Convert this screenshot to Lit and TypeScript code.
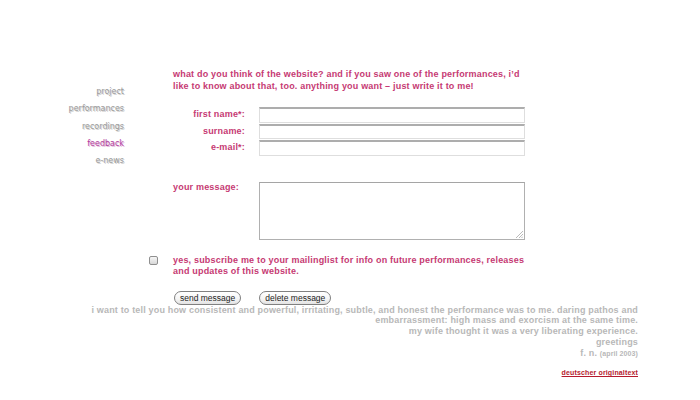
import { LitElement, html, css } from "lit";
import { customElement } from "lit/decorators.js";

@customElement("app-root")
export class AppRoot extends LitElement {
  static styles = css`
    :host { display: block; width: 700px; height: 400px; background: #fff; overflow: hidden;
      font-family: "Liberation Sans", Arial, sans-serif; font-size: 9px; font-weight: bold; letter-spacing: 0.19px; }
    .top { display: grid; grid-template-columns: 124px 1fr; column-gap: 49px; padding-top: 69px; }
    nav { display: flex; flex-direction: column; align-items: flex-end; gap: 5.3px; padding-top: 17px; }
    nav a { font-family: "DejaVu Sans", sans-serif; font-size: 8px; line-height: 12px; letter-spacing: 0; color: #9a9a9a;
      text-shadow: 1px 1px 0 #d0d0d0; font-weight: normal; }
    nav a.on { color: #b23a9c; text-shadow: 1px 1px 0 #e3b8da; }
    .main { color: #c63a73; line-height: 11.5px; width: 355px; }
    .intro { margin: 0; height: 38px; white-space: nowrap; }
    .fields { display: grid; grid-template-columns: 72px 266px; column-gap: 14px; row-gap: 1px; }
    .fields label { text-align: right; line-height: 15px; white-space: nowrap; }
    .box { box-sizing: border-box; display: block; height: 15.5px; margin: 0; padding: 0; width: 266px;
      border: 1px solid #dedede; border-top: 2px solid #adadad; background: #fff; }
    .msg { display: grid; grid-template-columns: 86px 266px; margin-top: 26px; }
    .area { position: relative; box-sizing: border-box; height: 58px; width: 266px; border: 1px solid #b0b0b0; border-top-color: #a5a5a5; }
    .grip { position: absolute; right: 1px; bottom: 1px; }
    .sub { display: flex; margin-left: -24px; margin-top: 15px; gap: 15px; }
    .check { box-sizing: border-box; width: 9px; height: 9px; margin-top: 1px; border: 1px solid #8f8f8f; border-radius: 2px;
      background: linear-gradient(#f6f6f6, #d8d8d8); flex: none; }
    .sub p { margin: 0; white-space: nowrap; }
    .btns { display: flex; margin-top: 13px; margin-left: 1px; gap: 18px; }
    .btn { box-sizing: border-box; height: 14px; padding: 0 5px; border: 1px solid #808080; border-radius: 7px;
      font-family: "Liberation Sans", Arial, sans-serif; font-size: 8.5px; font-weight: normal; letter-spacing: 0; line-height: 12px; color: #222;
      background: linear-gradient(#fff, #f4f4f4 60%, #e2e2e2); display: flex; align-items: center; }
    .note { margin: 0 62px 0 0; text-align: right; color: #b8b8b8; line-height: 10.8px; white-space: nowrap; letter-spacing: 0.175px; }
    .note small { font-size: 7px; letter-spacing: 0.1px; }
    .orig { margin: 9px 62px 0 0; text-align: right; line-height: 10px; font-size: 7px; letter-spacing: 0.15px; }
    .orig a { color: #b51a2e; text-decoration: underline; }
  `;

  render() {
    return html`
      <div class="top">
        <nav>
          <a>project</a><a>performances</a><a>recordings</a><a class="on">feedback</a><a>e-news</a>
        </nav>
        <div class="main">
          <p class="intro">what do you think of the website? and if you saw one of the performances, i’d<br />like to know about that, too. anything you want – just write it to me!</p>
          <div class="fields">
            <label>first name*:</label><div class="box"></div>
            <label>surname:</label><div class="box"></div>
            <label>e-mail*:</label><div class="box"></div>
          </div>
          <div class="msg">
            <label>your message:</label>
            <div class="area">
              <svg class="grip" width="7" height="7" viewBox="0 0 7 7" stroke="#aaa" stroke-width="0.8" fill="none">
                <path d="M0 7L7 0M3 7L7 3M5.5 7L7 5.5" />
              </svg>
            </div>
          </div>
          <div class="sub">
            <span class="check"></span>
            <p>yes, subscribe me to your mailinglist for info on future performances, releases<br />and updates of this website.</p>
          </div>
          <div class="btns">
            <span class="btn">send message</span><span class="btn">delete message</span>
          </div>
        </div>
      </div>
      <div class="note">
        i want to tell you how consistent and powerful, irritating, subtle, and honest the performance was to me. daring pathos and<br />
        embarrassment: high mass and exorcism at the same time.<br />
        my wife thought it was a very liberating experience.<br />
        greetings<br />
        f. n. <small>(april 2003)</small>
      </div>
      <div class="orig"><a>deutscher originaltext</a></div>
    `;
  }
}
